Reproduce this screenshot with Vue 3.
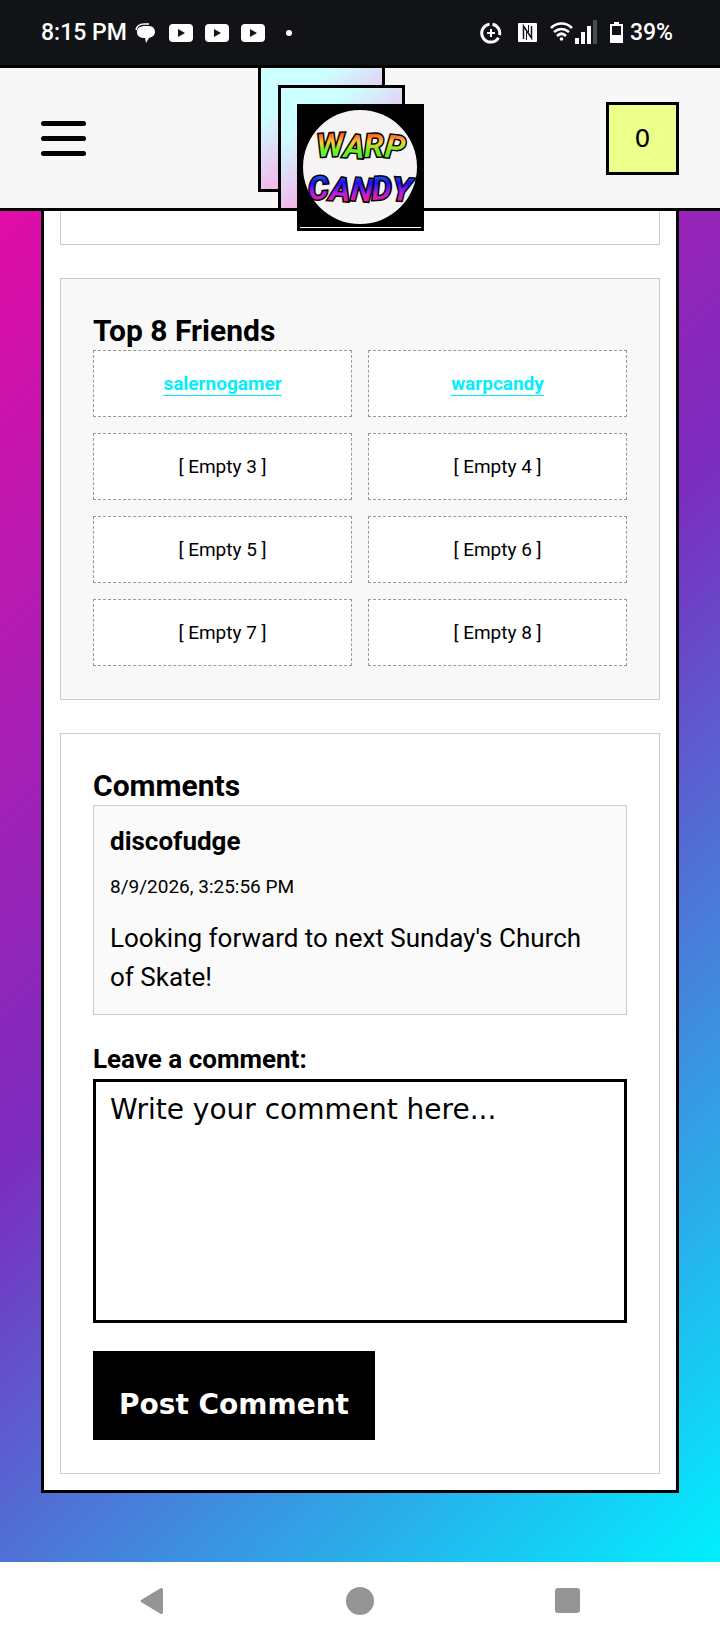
<template>
  <div class="screen">
    <div class="status-bar">
      <div class="status-left">
        <span class="time">8:15 PM</span>
        <svg class="chat-icon" width="20" height="20" viewBox="0 0 20 20">
          <path d="M1 7C2 2 6 1 9 1h5" fill="none" stroke="#fff" stroke-width="1.500" />
          <path
            d="M10 3h4c4 0 6 3 6 6s-2 5-6 6l-3 5-1-5C5 15 2 13 2 9s3-6 8-6z"
            fill="#fff"
          />
        </svg>
        <svg
          v-for="n in 3"
          :key="n"
          class="video-icon"
          width="24"
          height="18"
          viewBox="0 0 24 18"
        >
          <rect width="24" height="18" rx="4" fill="#fff" />
          <path d="M9 5l7 4-7 4z" fill="#121316" />
        </svg>
        <span class="dot"></span>
      </div>
      <div class="status-right">
        <svg width="22" height="22" viewBox="0 0 22 22" fill="none" stroke="#fff">
          <path d="M9.500 2.200a9 9 0 1 0 9 13.500" stroke-width="3" />
          <path d="M12.500 2.200a9 9 0 0 1 7 11" stroke-width="3" />
          <path d="M11 7v8M7 11h8" stroke-width="2" />
        </svg>
        <svg class="nfc-icon" width="19" height="19" viewBox="0 0 19 19">
          <rect width="19" height="19" rx="1" fill="#fff" />
          <path
            d="M5.500 16V3l8 12V3"
            fill="none"
            stroke="#121316"
            stroke-width="1.500"
          />
          <path d="M8.500 9v8M10.500 2v7" stroke="#121316" stroke-width="1" />
        </svg>
        <svg class="wifi-icon" width="47" height="25" viewBox="0 0 47 25">
          <g fill="none" stroke="#fff" stroke-width="2.600">
            <path d="M1 8c6-6 15-6 21 0" />
            <path d="M4 12c5-4 10-4 15 0" />
            <path d="M7 16c3-3 6-3 9 0" />
          </g>
          <circle cx="11.500" cy="19" r="1.800" fill="#fff" />
          <path d="M25 18h4v6h-4zM31 12h4v12h-4zM37 6h4v18h-4z" fill="#fff" />
          <path d="M43 0h4v24h-4z" fill="#4b4c4f" />
        </svg>
        <svg class="battery-icon" width="13" height="21" viewBox="0 0 13 21">
          <path d="M4 0h5v3H4z" fill="#fff" />
          <rect x="1" y="3" width="11" height="17" fill="none" stroke="#fff" stroke-width="2" />
          <path d="M1 13h11v7H1z" fill="#fff" />
        </svg>
        <span class="percent">39%</span>
      </div>
    </div>

    <div class="site">
      <header class="site-header">
        <button class="menu-button" aria-label="Menu">
          <span></span>
          <span></span>
          <span></span>
        </button>

        <!-- stacked frames behind the logo, cut off by the header -->
        <div class="frames">
          <div class="frame"></div>
          <div class="frame frame-second"></div>
        </div>
        <a class="logo" href="#" aria-label="Warp Candy">
          <svg width="121" height="120" viewBox="0 0 121 120">
            <defs>
              <linearGradient id="warp" x1="0" y1="0" x2="0" y2="1">
                <stop offset="0.150" stop-color="#ff3b1f" />
                <stop offset="0.400" stop-color="#ffc938" />
                <stop offset="0.600" stop-color="#6cf02c" />
                <stop offset="1" stop-color="#35e04f" />
              </linearGradient>
              <linearGradient id="candy" x1="0" y1="0" x2="0" y2="1">
                <stop offset="0.150" stop-color="#1c6cf0" />
                <stop offset="0.350" stop-color="#1a10f0" />
                <stop offset="0.600" stop-color="#b31fe8" />
                <stop offset="0.850" stop-color="#ff1f5c" />
              </linearGradient>
            </defs>
            <rect width="121" height="120" fill="#000" />
            <circle cx="60" cy="60" r="57" fill="#f6f4f4" />
            <text class="logo-text" x="17" y="50" rotate="-3 4 -2 6" fill="url(#warp)">
              WARP
            </text>
            <text class="logo-text" x="9" y="93" rotate="-5 4 5 -3 4" fill="url(#candy)">
              CANDY
            </text>
          </svg>
        </a>

        <button class="cart-button" aria-label="Cart">0</button>
      </header>

      <main class="profile">
        <section class="card card-cut"></section>

        <section class="card friends">
          <h2>Top 8 Friends</h2>
          <div class="friend-grid">
            <div v-for="(friend, index) in friends" :key="index" class="friend">
              <a v-if="friend" href="#">{{ friend }}</a>
              <span v-else>[ Empty {{ index + 1 }} ]</span>
            </div>
          </div>
        </section>

        <section class="card">
          <h2>Comments</h2>
          <article v-for="comment in comments" :key="comment.id" class="comment">
            <h3>{{ comment.author }}</h3>
            <time>{{ comment.date }}</time>
            <p>{{ comment.text }}</p>
          </article>

          <form @submit.prevent="postComment">
            <label for="comment">Leave a comment:</label>
            <textarea
              id="comment"
              v-model="newComment"
              placeholder="Write your comment here..."
            ></textarea>
            <button class="post-button" type="submit">Post Comment</button>
          </form>
        </section>
      </main>
    </div>

    <nav class="system-nav">
      <button aria-label="Back">
        <svg width="28" height="28" viewBox="0 0 28 28">
          <path
            d="M3 13L22 1.500q3-1.500 3 1.500v22q0 3-3 1.500L3 15q-1.500-1 0-2z"
            fill="#959595"
          />
        </svg>
      </button>
      <button aria-label="Home">
        <svg width="28" height="28" viewBox="0 0 28 28">
          <circle cx="14" cy="14" r="14" fill="#959595" />
        </svg>
      </button>
      <button aria-label="Recent apps">
        <svg width="28" height="28" viewBox="0 0 28 28">
          <rect x="1" y="1" width="25" height="25" rx="3" fill="#959595" />
        </svg>
      </button>
    </nav>
  </div>
</template>

<script setup>
import { ref } from "vue";

const friends = ["salernogamer", "warpcandy", "", "", "", "", "", ""];

const comments = ref([
  {
    id: 1,
    author: "discofudge",
    date: "8/9/2026, 3:25:56 PM",
    text: "Looking forward to next Sunday's Church of Skate!",
  },
]);

const newComment = ref("");

const postComment = () => {
  if (!newComment.value.trim()) return;
  comments.value.push({
    id: comments.value.length + 1,
    author: "salernogamer",
    date: new Date().toLocaleString("en-US"),
    text: newComment.value,
  });
  newComment.value = "";
};
</script>

<style>
body {
  margin: 0;
  background-color: white;
}
</style>

<style scoped>
* {
  box-sizing: border-box;
}

.screen {
  display: flex;
  flex-direction: column;
  min-height: 100vh;
  font-family: Roboto, "Liberation Sans", sans-serif;
  color: black;
}

button {
  padding: 0;
  border: none;
  background: none;
  color: black;
  cursor: pointer;
}

svg {
  display: block;
}

/* status bar */
.status-bar {
  display: flex;
  justify-content: space-between;
  align-items: center;
  height: 65px;
  padding: 0 47px 0 41px;
  background-color: #121316;
  color: white;
  font-size: 23px;
  font-weight: 500;
}

.status-left,
.status-right {
  display: flex;
  align-items: center;
}

.chat-icon {
  margin: 0 2px 0 8px;
}

.video-icon {
  margin-left: 12px;
}

.dot {
  width: 6px;
  height: 6px;
  margin-left: 21px;
  border-radius: 50%;
  background-color: white;
}

.nfc-icon {
  margin-left: 16px;
}

.wifi-icon {
  margin-left: 13px;
}

.battery-icon {
  margin: 0 7px 0 13px;
}

/* header */
.site {
  flex: 1;
  background: linear-gradient(135deg, #f008a2 0%, #7b2cbf 50%, #00f0ff 100%);
}

.site-header {
  position: relative;
  display: flex;
  justify-content: space-between;
  align-items: center;
  height: 146px;
  padding: 0 41px;
  border-top: 3px solid black;
  border-bottom: 3px solid black;
  background-color: #f7f7f7;
}

.menu-button {
  display: flex;
  flex-direction: column;
  gap: 10px;
  width: 45px;
}

.menu-button span {
  height: 5px;
  border-radius: 3px;
  background-color: black;
}

.frames {
  position: absolute;
  top: -3px;
  bottom: 0;
  left: 50%;
  width: 147px;
  margin-left: -102px;
  overflow: hidden;
}

.frame {
  position: absolute;
  top: 0;
  left: 0;
  width: 127px;
  height: 127px;
  border: 3px solid black;
  background: linear-gradient(145deg, #ccffff 25%, #f3b8ec 62%);
}

.frame-second {
  top: 20px;
  left: 20px;
}

.logo {
  position: absolute;
  top: 36px;
  left: 50%;
  width: 127px;
  height: 127px;
  margin-left: -63px;
  border: 3px solid black;
  background-color: white;
}

.logo-text {
  font-family: Roboto, sans-serif;
  font-size: 32px;
  font-style: italic;
  font-weight: 600;
  stroke: black;
  stroke-width: 3px;
  paint-order: stroke;
}

.cart-button {
  width: 73px;
  height: 73px;
  border: 3px solid black;
  background-color: #ecff8a;
  font-family: "DejaVu Sans", sans-serif;
  font-size: 25px;
}

/* profile */
.profile {
  display: flex;
  flex-direction: column;
  gap: 33px;
  margin: 0 41px 68px;
  padding: 0 16px 16px;
  border: 3px solid black;
  border-top: none;
  background-color: white;
}

.card {
  padding: 32px 32px 33px;
  border: 1px solid #cccccc;
}

.card-cut {
  padding: 33px 0 0;
  border-top: none;
}

.friends {
  background-color: #f8f8f8;
}

h2 {
  margin: 0;
  font-size: 30px;
  font-weight: 700;
  line-height: 39px;
}

.friend-grid {
  display: grid;
  grid-template-columns: 1fr 1fr;
  gap: 16px;
}

.friend {
  padding: 16px;
  border: 1px dashed #999999;
  background-color: white;
  font-size: 19px;
  line-height: 33px;
  text-align: center;
}

.friend a {
  border-bottom: 1px solid #00f0ff;
  color: #00f0ff;
  font-weight: 700;
  text-decoration: none;
}

.comment {
  padding: 16px 16px 17px;
  border: 1px solid #cccccc;
  background-color: #fafafa;
  font-size: 26px;
  line-height: 39px;
}

.comment h3 {
  margin: 0 0 10px;
  font-size: 26px;
  font-weight: 700;
}

.comment time {
  display: block;
  font-size: 19px;
  line-height: 32px;
}

.comment p {
  margin: 16px 0 0;
}

form {
  display: flex;
  flex-direction: column;
  align-items: flex-start;
  margin-top: 25px;
}

label {
  font-size: 26px;
  font-weight: 700;
  line-height: 39px;
}

textarea {
  display: block;
  width: 100%;
  height: 244px;
  padding: 8px 14px;
  border: 3px solid black;
  border-radius: 0;
  background-color: white;
  color: black;
  font-family: "DejaVu Sans", sans-serif;
  font-size: 28px;
  line-height: 39px;
  outline: none;
  resize: none;
}

textarea::placeholder {
  color: black;
  opacity: 1;
}

.post-button {
  margin-top: 28px;
  padding: 34px 26px 16px;
  background-color: black;
  color: white;
  font-family: "DejaVu Sans", sans-serif;
  font-size: 28px;
  font-weight: 700;
  line-height: 39px;
}

/* system navigation */
.system-nav {
  display: grid;
  grid-template-columns: repeat(3, 1fr);
  align-items: center;
  height: 78px;
  padding: 0 48px;
  background-color: white;
}

.system-nav button {
  display: flex;
  justify-content: center;
}
</style>
